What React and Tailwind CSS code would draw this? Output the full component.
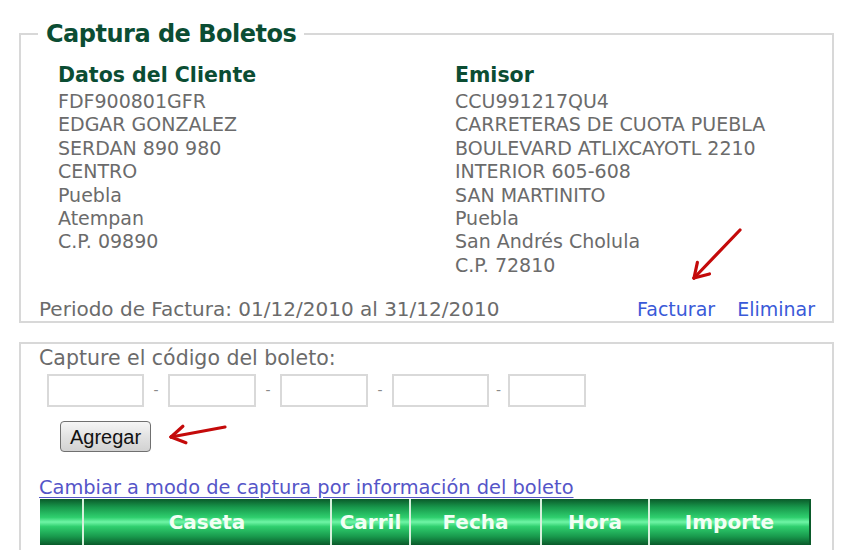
import React from 'react';

const cliente = [
  'FDF900801GFR',
  'EDGAR GONZALEZ',
  'SERDAN 890 980',
  'CENTRO',
  'Puebla',
  'Atempan',
  'C.P. 09890',
];

const emisor = [
  'CCU991217QU4',
  'CARRETERAS DE CUOTA PUEBLA',
  'BOULEVARD ATLIXCAYOTL 2210',
  'INTERIOR 605-608',
  'SAN MARTINITO',
  'Puebla',
  'San Andrés Cholula',
  'C.P. 72810',
];

const columnas = [
  { label: '', w: 'w-[42px]' },
  { label: 'Caseta', w: 'w-[248px]' },
  { label: 'Carril', w: 'w-[79px]' },
  { label: 'Fecha', w: 'w-[131px]' },
  { label: 'Hora', w: 'w-[108px]' },
  { label: 'Importe', w: 'flex-1' },
];

const campos = ['w-[97px]', 'w-[88px]', 'w-[88px]', 'w-[97px]', 'w-[78px]'];

function RedArrow({ className, x1, y1, x2, y2 }) {
  // flecha roja dibujada a mano, punta en (x2, y2)
  const ang = Math.atan2(y2 - y1, x2 - x1);
  const len = 16;
  const a1 = ang + Math.PI - 0.55;
  const a2 = ang + Math.PI + 0.55;
  return (
    <svg className={className} width="862" height="550" viewBox="0 0 862 550">
      <g stroke="#c40a0a" strokeWidth="3.2" strokeLinecap="round" fill="none">
        <line x1={x1} y1={y1} x2={x2} y2={y2} />
        <line x1={x2} y1={y2} x2={x2 + len * Math.cos(a1)} y2={y2 + len * Math.sin(a1)} />
        <line x1={x2} y1={y2} x2={x2 + len * Math.cos(a2)} y2={y2 + len * Math.sin(a2)} />
      </g>
    </svg>
  );
}

function Column({ title, lines }) {
  return (
    <div>
      <h3 className="mb-[3px] text-[20.5px] leading-[24px] font-bold text-[#0b4d33]">{title}</h3>
      {lines.map((l) => (
        <div key={l} className="text-[19px] leading-[23.4px] text-[#6b6b6b]">
          {l}
        </div>
      ))}
    </div>
  );
}

export default function App() {
  return (
    <div
      className="relative w-[862px] h-[550px] overflow-hidden bg-white pl-[19px]"
      style={{ fontFamily: '"DejaVu Sans", Verdana, sans-serif' }}
    >
      {/* Datos del boleto */}
      <fieldset className="w-[815px] border-2 border-[#d8d8d8] mt-[19px]">
        <legend className="ml-[17px] px-2 text-[24px] leading-[30px] tracking-[-0.5px] font-bold text-[#0b4d33]">
          Captura de Boletos
        </legend>
        <div className="flex pl-[37px] pt-[14px]">
          <div className="w-[397px]">
            <Column title="Datos del Cliente" lines={cliente} />
          </div>
          <Column title="Emisor" lines={emisor} />
        </div>
        <div className="flex items-center pl-[18px] pr-[17px] mt-[20px] text-[20px] leading-[24px]">
          <span className="text-[#6b6b6b]">Periodo de Factura: 01/12/2010 al 31/12/2010</span>
          <span className="ml-auto text-[19px] text-[#3a5ad8]">Facturar</span>
          <span className="ml-[22px] text-[19px] text-[#3a5ad8]">Eliminar</span>
        </div>
      </fieldset>

      {/* Captura del código */}
      <div className="w-[815px] h-[220px] mt-[19px] border-2 border-b-0 border-[#d8d8d8] pl-[18px] pt-[2px]">
        <div className="text-[20.5px] leading-[24px] text-[#6b6b6b]">Capture el código del boleto:</div>
        <div className="flex items-center mt-[4px] ml-[8px]">
          {campos.map((w, i) => (
            <React.Fragment key={i}>
              <input className={`${w} h-[33px] border-2 border-[#d9d9d9] bg-white`} />
              {i < campos.length - 1 && (
                <span className={`${i === campos.length - 2 ? 'w-[19px]' : 'w-[24px]'} text-center text-[14px] text-[#8a8a8a]`}>
                  -
                </span>
              )}
            </React.Fragment>
          ))}
        </div>
        <button
          className="mt-[14px] ml-[21px] w-[91px] h-[31px] rounded-[4px] border border-[#707070] bg-[linear-gradient(to_bottom,#f6f6f6,#e2e2e2_50%,#d2d2d2)] text-[20px] leading-[24px] text-[#111]"
          style={{ fontFamily: '"Liberation Sans", Arial, sans-serif' }}
        >
          Agregar
        </button>
        <div className="mt-[24px] text-[19.4px] leading-[24px] text-[#5555c8] underline underline-offset-[3px]">
          Cambiar a modo de captura por información del boleto
        </div>
        <div className="flex w-[771px] h-[46px] mt-[-1px] ml-[1px] border-r-2 border-[#0a5a2a] bg-[linear-gradient(to_bottom,#0a5a2a,#18984c_18%,#2fcf6e_40%,#6ff5a6_50%,#2fcf6e_60%,#18984c_82%,#0a5a2a)]">
          {columnas.map((c, i) => (
            <div
              key={i}
              className={`${c.w} flex items-center justify-center text-[20px] font-bold text-[#f2fff4] ${i > 0 ? 'border-l-2 border-[#d6f1dc]' : ''}`}
            >
              {c.label}
            </div>
          ))}
        </div>
      </div>

      <RedArrow className="absolute left-0 top-0 pointer-events-none" x1={740} y1={230} x2={694} y2={278} />
      <RedArrow className="absolute left-0 top-0 pointer-events-none" x1={225} y1={427} x2={171} y2={437} />
    </div>
  );
}
